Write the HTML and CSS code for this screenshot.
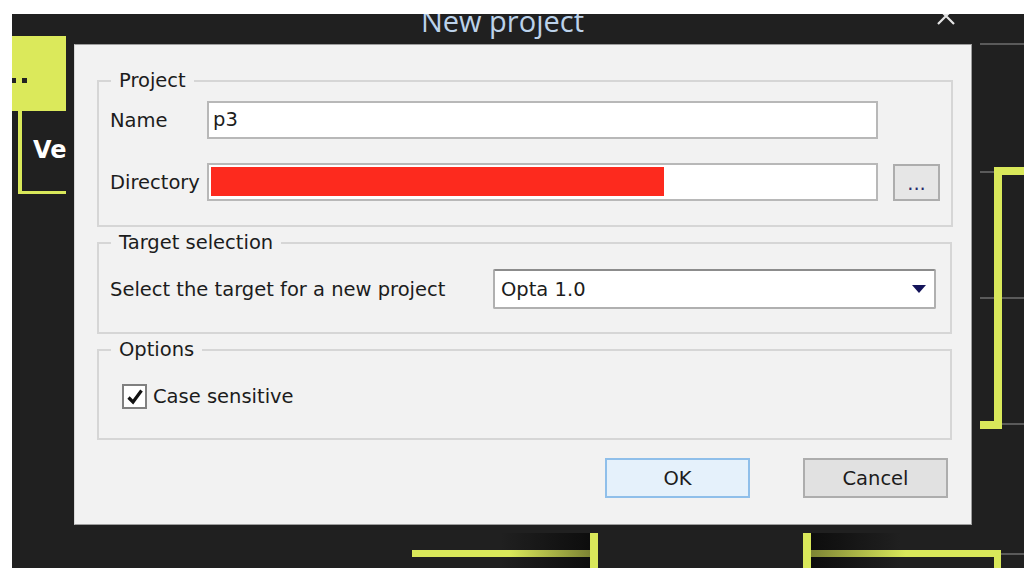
FILE: index.html
```html
<!DOCTYPE html>
<html lang="en">
<head>
    <meta charset="UTF-8">
    <title>New project</title>
    <link rel="stylesheet" href="styles.css">
</head>
<body>
    <div class="screen">
        <!-- backdrop diagram behind the modal -->
        <div class="block-head"><span class="dot d1"></span><span class="dot d2"></span></div>
        <div class="wire" style="left:6px;top:97px;width:4px;height:80px"></div>
        <div class="wire" style="left:6px;top:177px;width:48px;height:3px"></div>
        <div class="block-label">Ve</div>

        <div class="rule" style="left:968px;top:29px;width:44px"></div>
        <div class="rule" style="left:968px;top:157px;width:14px"></div>
        <div class="rule" style="left:968px;top:283px;width:44px"></div>
        <div class="rule" style="left:989px;top:409px;width:23px"></div>
        <div class="rule" style="left:989px;top:539px;width:23px"></div>
        <div class="wire" style="left:982px;top:153px;width:8px;height:262px"></div>
        <div class="wire" style="left:989px;top:153px;width:23px;height:8px"></div>
        <div class="wire" style="left:968px;top:407px;width:22px;height:8px"></div>

        <div class="shade shade-l"></div>
        <div class="shade shade-r"></div>
        <div class="wire fade-r" style="left:400px;top:536px;width:178px;height:7px"></div>
        <div class="wire" style="left:578px;top:519px;width:8px;height:40px"></div>
        <div class="wire" style="left:791px;top:519px;width:8px;height:40px"></div>
        <div class="wire fade-l" style="left:799px;top:536px;width:190px;height:7px"></div>
        <div class="wire" style="left:982px;top:536px;width:7px;height:20px"></div>

        <div class="titlebar">
            <span class="title">New project</span>
            <svg class="close" width="20" height="20" viewBox="0 0 20 20">
                <path d="M2 2 L18 18 M18 2 L2 18" stroke="#e4e4e4" stroke-width="2.2" fill="none"/>
            </svg>
        </div>

        <div class="dialog">
            <fieldset class="group">
                <legend>Project</legend>
                <div class="group-body body-project">
                    <div class="row">
                        <label class="field-label" for="name">Name</label>
                        <div class="textbox" id="name">p3</div>
                    </div>
                    <div class="row">
                        <label class="field-label" for="dir">Directory</label>
                        <div class="textbox" id="dir"><span class="redacted"></span></div>
                        <button class="btn browse">...</button>
                    </div>
                </div>
            </fieldset>

            <fieldset class="group">
                <legend>Target selection</legend>
                <div class="group-body body-target">
                    <span>Select the target for a new project</span>
                    <div class="combo">
                        <span>Opta 1.0</span>
                        <svg width="14" height="8" viewBox="0 0 14 8"><path d="M0 0 H14 L7 8 Z" fill="#14145a"/></svg>
                    </div>
                </div>
            </fieldset>

            <fieldset class="group">
                <legend>Options</legend>
                <div class="group-body body-options">
                    <span class="checkbox">
                        <svg width="20" height="20" viewBox="0 0 20 20"><path d="M3.5 10.5 L8 15 L16.5 3.5" stroke="#111" stroke-width="3.2" fill="none"/></svg>
                    </span>
                    <span>Case sensitive</span>
                </div>
            </fieldset>

            <div class="actions">
                <button class="btn btn-ok">OK</button>
                <button class="btn">Cancel</button>
            </div>
        </div>
    </div>
</body>
</html>
```

FILE: styles.css
```css
body {
    margin: 0;
    padding: 0;
    background-color: #ffffff;
    font-family: 'DejaVu Sans', sans-serif;
    font-size: 19.5px;
    color: #1c1c1c;
}
.screen {
    position: relative;
    margin: 14px 0 0 12px;
    width: 1012px;
    height: 554px;
    background-color: #202020;
    overflow: hidden;
}
.wire {
    position: absolute;
    background: #d9e85a;
}
.fade-r {
    background: linear-gradient(to right, #d9e85a 55%, #7d8434 100%);
}
.fade-l {
    background: linear-gradient(to left, #d9e85a 50%, #7d8434 100%);
}
.rule {
    position: absolute;
    height: 2px;
    background: #5a5a5a;
}
.shade {
    position: absolute;
    top: 519px;
    width: 90px;
    height: 35px;
}
.shade-l {
    left: 488px;
    background: linear-gradient(to right, rgba(0, 0, 0, 0), #0d0d0d);
}
.shade-r {
    left: 799px;
    background: linear-gradient(to left, rgba(0, 0, 0, 0), #0d0d0d);
}
.block-head {
    position: absolute;
    left: 0;
    top: 22px;
    width: 54px;
    height: 75px;
    background: #dbe95b;
}
.dot {
    position: absolute;
    top: 42px;
    width: 5px;
    height: 5px;
    background: #222;
}
.d1 { left: 0; width: 4px; }
.d2 { left: 10px; }
.block-label {
    position: absolute;
    left: 21px;
    top: 122px;
    color: #ffffff;
    font-weight: bold;
    font-size: 24px;
    white-space: nowrap;
}

.titlebar {
    display: flex;
    justify-content: space-between;
    align-items: flex-start;
    height: 30px;
    padding: 0 68px 0 409px;
}
.title {
    margin-top: -8px;
    font-family: 'Open Sans', sans-serif;
    font-size: 29px;
    line-height: 30px;
    color: #bcd2ea;
}
.close {
    margin-top: -8px;
}

.dialog {
    position: relative;
    z-index: 1;
    margin-left: 62px;
    width: 898px;
    height: 481px;
    box-sizing: border-box;
    padding: 26px 20px 0 22px;
    background-color: #f2f2f2;
    border: 1px solid #9d9d9d;
    border-left-color: #d8d8d8;
}
.group {
    margin: 0 0 6px 0;
    width: 855px;
    box-sizing: border-box;
    border: 2px solid #d6d6d6;
    padding: 0;
}
.group legend {
    margin-left: 12px;
    padding: 0 8px;
    line-height: 20px;
}
.body-project {
    padding: 10px 11px 24px 11px;
}
.row {
    display: flex;
    align-items: center;
    height: 38px;
}
.row + .row {
    margin-top: 24px;
}
.field-label {
    width: 97px;
}
.textbox {
    width: 671px;
    height: 38px;
    box-sizing: border-box;
    border: 2px solid #b8b8b8;
    background: #ffffff;
    padding: 3px 4px;
    line-height: 28px;
}
.redacted {
    display: block;
    margin: -1px 0 0 -2px;
    width: 453px;
    height: 29px;
    background: #fd2a1e;
}
.btn {
    font-family: 'DejaVu Sans', sans-serif;
    font-size: 19.5px;
    color: #1c1c1c;
    background: #e1e1e1;
    border: 2px solid #adadad;
    width: 145px;
    height: 40px;
    padding: 0;
}
.browse {
    margin-left: 15px;
    width: 47px;
    height: 37px;
    padding-top: 4px;
    line-height: 24px;
    color: #2a2a6a;
    background: #e6e6e6;
}

.body-target {
    display: flex;
    justify-content: space-between;
    align-items: center;
    padding: 16px 14px 23px 11px;
}
.combo {
    display: flex;
    justify-content: space-between;
    align-items: center;
    width: 443px;
    height: 40px;
    box-sizing: border-box;
    padding: 0 8px 0 6px;
    background: #ffffff;
    border: 2px solid #b0b0b0;
    border-top-color: #8c8c8c;
    border-radius: 2px;
}

.body-options {
    display: flex;
    align-items: center;
    gap: 6px;
    padding: 24px 11px 29px 23px;
}
.checkbox {
    display: flex;
    align-items: center;
    justify-content: center;
    width: 25px;
    height: 25px;
    box-sizing: border-box;
    border: 2px solid #808080;
    background: #ffffff;
}

.actions {
    display: flex;
    justify-content: flex-end;
    gap: 53px;
    margin-top: 18px;
    padding-right: 3px;
}
.btn-ok {
    background: #e5f1fb;
    border-color: #8fbfea;
}
```
